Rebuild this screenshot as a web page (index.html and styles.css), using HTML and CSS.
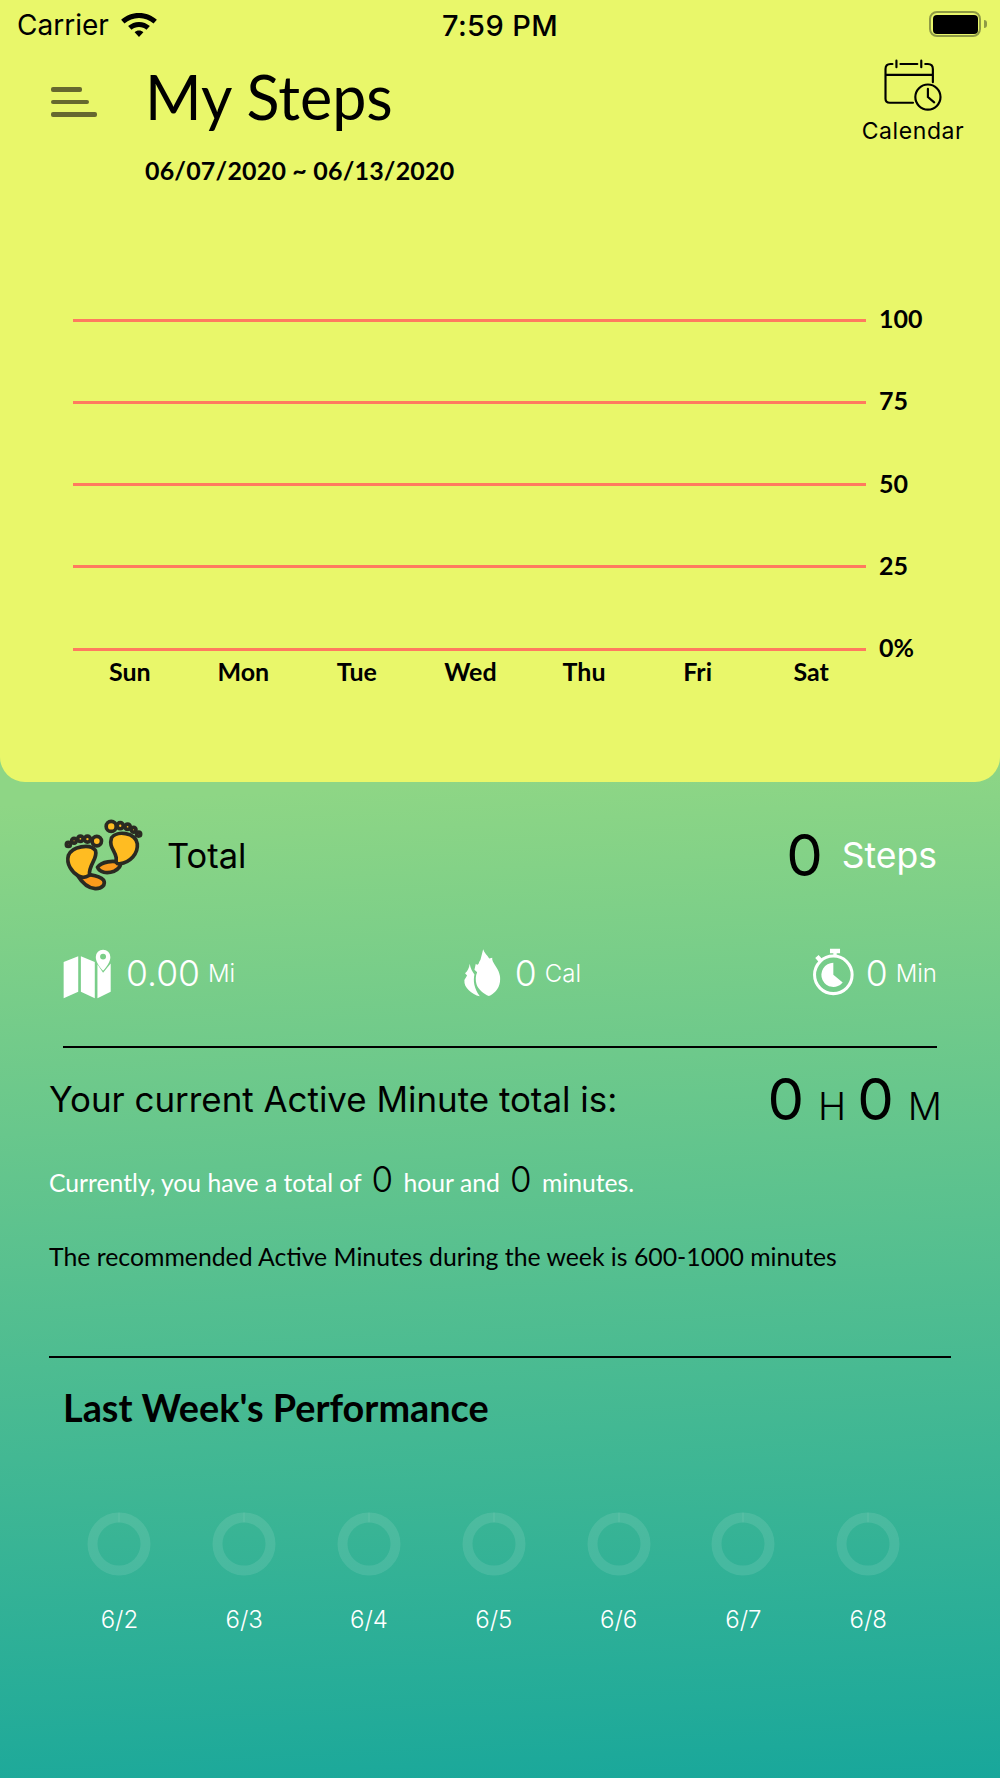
FILE: index.html
```html
<!DOCTYPE html>
<html lang="en">
<head>
<meta charset="utf-8">
<title>My Steps</title>
<link rel="stylesheet" href="styles.css">
</head>
<body>
<main class="screen">
  <section class="panel">
    <div class="status">
      <div class="status-left">
        <span>Carrier</span>
        <svg class="wifi" viewBox="0 0 36 26"><path d="M18 3C11 3 5.500 5.500 .8 9.500L4 13C8 9.700 12.500 7.700 18 7.700S28 9.700 32 13L35.200 9.500C30.500 5.500 25 3 18 3ZM18 11.500C14 11.500 10.500 13 7.500 15.500L10.800 19C12.800 17.300 15.200 16.300 18 16.300S23.200 17.300 25.200 19L28.500 15.500C25.500 13 22 11.500 18 11.500ZM18 19.800C16.300 19.800 14.900 20.400 13.800 21.400L18 26L22.200 21.400C21.100 20.400 19.700 19.800 18 19.800Z"/></svg>
      </div>
      <div class="status-time">7:59 PM</div>
      <div class="battery"><span class="battery-shell"><span class="battery-fill"></span></span><span class="battery-nub"></span></div>
    </div>
    <header class="head">
      <div class="menu"><i class="bar bar1"></i><i class="bar bar2"></i><i class="bar bar3"></i></div>
      <div class="titles">
        <h1>My Steps</h1>
        <p class="range">06/07/2020 ~ 06/13/2020</p>
      </div>
      <div class="cal">
        <svg class="cal-icon" viewBox="40 25 180 160" fill="none" stroke="#000" stroke-width="6.500" stroke-linecap="round">
          <path d="M68 40H62Q47 40 47 55V145Q47 157 60 157H130M92 40H143M167 40H175Q190 40 190 55V95M47 73H190M80 30V50M155 30V50"/>
          <circle cx="175" cy="140" r="38"/>
          <path d="M175 115V140L194 156"/>
        </svg>
        <span>Calendar</span>
      </div>
    </header>
    <div class="chart">
      <div class="gridrow"><i class="line"></i><span>100</span></div>
      <div class="gridrow"><i class="line"></i><span>75</span></div>
      <div class="gridrow"><i class="line"></i><span>50</span></div>
      <div class="gridrow"><i class="line"></i><span>25</span></div>
      <div class="gridrow"><i class="line"></i><span>0%</span></div>
      <div class="days"><span>Sun</span><span>Mon</span><span>Tue</span><span>Wed</span><span>Thu</span><span>Fri</span><span>Sat</span></div>
    </div>
  </section>

  <section class="totals">
    <div class="total-row">
      <svg class="feet" viewBox="60 50 260 230" stroke="#2a2a22" stroke-width="11" stroke-linejoin="round">
        <path fill="#fb9a1c" d="M112 224C130 218 175 222 190 238C198 252 185 265 165 264C140 262 125 245 112 224Z"/>
        <path fill="#ffbc22" d="M85 165C95 138 150 128 166 150C174 175 145 192 148 224C135 232 125 232 115 226C95 215 78 190 85 165Z"/>
        <circle fill="#ffbc22" cx="170" cy="122" r="14"/><circle fill="#ffbc22" cx="142" cy="116" r="9"/><circle fill="#ffbc22" cx="121" cy="115" r="8"/><circle fill="#ffbc22" cx="102" cy="121" r="7"/><circle fill="#ffbc22" cx="85" cy="132" r="6"/>
        <path fill="#fb9a1c" d="M172 200C185 182 220 180 238 186C245 195 235 205 222 212C200 220 178 216 172 200Z"/>
        <path fill="#ffbc22" d="M214 112C230 90 285 95 291 130C294 160 270 185 238 190C225 190 228 182 228 172C225 150 205 140 214 112Z"/>
        <circle fill="#ffbc22" cx="213" cy="78" r="15"/><circle fill="#ffbc22" cx="240" cy="76" r="9"/><circle fill="#ffbc22" cx="262" cy="79" r="8"/><circle fill="#ffbc22" cx="280" cy="88" r="7"/><circle fill="#ffbc22" cx="295" cy="101" r="6"/>
      </svg>
      <span class="total-label">Total</span>
      <span class="total-num">0</span>
      <span class="total-unit">Steps</span>
    </div>
    <div class="metrics">
      <div class="metric">
        <svg class="ic-map" viewBox="30 50 160 160" fill="#fff">
          <path d="M38 95L82 78V185L38 205ZM90 78L132 95V205L90 185ZM140 102L157 128L180 100V185L140 205Z"/>
          <path fill-rule="evenodd" d="M157 122C145 108 135 95 135 80A22 22 0 0 1 179 80C179 95 169 108 157 122ZM157 70A9 9 0 1 0 157 88A9 9 0 1 0 157 70Z"/>
        </svg>
        <span class="m-num">0.00</span><span class="m-unit">Mi</span>
      </div>
      <div class="metric metric-mid">
        <svg class="ic-fire" viewBox="35 50 125 155" fill="#fff">
          <path d="M98 57C101 68 110 74 116 84L125 82C124 90 128 94 133 104C145 122 151 136 148 154C145 175 130 190 115 196C100 190 82 175 78 160C75 150 75 135 80 125L72 118L76 100C80 104 84 104 86 95L90 88Z"/>
          <path d="M58 100C60 110 62 118 72 132C68 150 70 172 88 197C64 190 40 172 42 148L50 135L44 128C52 122 56 112 58 100Z"/>
        </svg>
        <span class="m-num">0</span><span class="m-unit">Cal</span>
      </div>
      <div class="metric">
        <svg class="ic-timer" viewBox="40 50 125 155" fill="#fff">
          <circle cx="102" cy="133" r="56" fill="none" stroke="#fff" stroke-width="9"/>
          <path d="M102 133V97A36 36 0 1 0 130 156Z"/>
          <path d="M92 55H122V69H112V80H102V69H92ZM48 83L58 74L70 87L60 96Z"/>
        </svg>
        <span class="m-num">0</span><span class="m-unit">Min</span>
      </div>
    </div>
    <hr class="rule rule-a">
    <div class="active">
      <p class="active-label">Your current Active Minute total is:</p>
      <p class="active-value"><b>0</b><small>H</small><b>0</b><small>M</small></p>
    </div>
    <p class="current">Currently, you have a total of <b>0</b> hour and <b>0</b> minutes.</p>
    <p class="recommend">The recommended Active Minutes during the week is 600-1000 minutes</p>
    <hr class="rule rule-b">
    <h2>Last Week's Performance</h2>
    <div class="rings">
      <div class="ring"><svg viewBox="0 0 64 64"><circle class="track" cx="32" cy="32" r="26.500"/><path class="tick" d="M32 .5V10.500"/></svg><span>6/2</span></div>
      <div class="ring"><svg viewBox="0 0 64 64"><circle class="track" cx="32" cy="32" r="26.500"/><path class="tick" d="M32 .5V10.500"/></svg><span>6/3</span></div>
      <div class="ring"><svg viewBox="0 0 64 64"><circle class="track" cx="32" cy="32" r="26.500"/><path class="tick" d="M32 .5V10.500"/></svg><span>6/4</span></div>
      <div class="ring"><svg viewBox="0 0 64 64"><circle class="track" cx="32" cy="32" r="26.500"/><path class="tick" d="M32 .5V10.500"/></svg><span>6/5</span></div>
      <div class="ring"><svg viewBox="0 0 64 64"><circle class="track" cx="32" cy="32" r="26.500"/><path class="tick" d="M32 .5V10.500"/></svg><span>6/6</span></div>
      <div class="ring"><svg viewBox="0 0 64 64"><circle class="track" cx="32" cy="32" r="26.500"/><path class="tick" d="M32 .5V10.500"/></svg><span>6/7</span></div>
      <div class="ring"><svg viewBox="0 0 64 64"><circle class="track" cx="32" cy="32" r="26.500"/><path class="tick" d="M32 .5V10.500"/></svg><span>6/8</span></div>
    </div>
  </section>
</main>
</body>
</html>
```
FILE: styles.css
```css
* { box-sizing: border-box; }
html, body { margin: 0; padding: 0; }
body { width: 1000px; height: 1778px; overflow: hidden; font-family: Inter, "Liberation Sans", sans-serif; color: #000; }
p, h1, h2 { margin: 0; font-weight: 400; }
.screen { width: 1000px; height: 1778px; background: linear-gradient(177deg, #8ed685 44%, #18a79b 100%); }

.panel { height: 782px; background: #e9f76a; border-radius: 0 0 25px 25px; }
.status { height: 50px; display: flex; align-items: center; padding: 0 13px 0 17px; justify-content: space-between; }
.status-left { display: flex; align-items: center; gap: 11px; font-size: 28px; width: 300px; }
.wifi { width: 38px; height: 27px; margin-top: -4px; }
.status-time { font-size: 29px; font-weight: 500; letter-spacing: .4px; margin-right: 4px; }
.battery { width: 300px; display: flex; justify-content: flex-end; align-items: center; margin-top: -2px; }
.battery-shell { width: 52px; height: 26px; border: 2.500px solid #8f9a45; border-radius: 8px; padding: 1.500px; display: block; }
.battery-fill { display: block; height: 100%; background: #000; border-radius: 4px; }
.battery-nub { width: 3px; height: 8px; background: #8f9a45; border-radius: 0 3px 3px 0; margin-left: 3px; }

.head { display: flex; height: 130px; padding-left: 51px; }
.menu { width: 46px; padding-top: 37px; display: flex; flex-direction: column; gap: 8px; flex: none; }
.bar { display: block; height: 4.500px; background: #66682f; border-radius: 2px; }
.bar1 { width: 31px; }
.bar2 { width: 38px; }
.bar3 { width: 46px; }
.titles { padding: 9px 0 0 48px; flex: 1; }
h1 { font-family: Lato, sans-serif; font-size: 61px; line-height: 76px; }
.range { font-family: Lato, sans-serif; font-weight: 700; font-size: 25px; letter-spacing: .18px; margin-top: 20px; line-height: 30px; }
.cal { width: 110px; margin-right: 32px; display: flex; flex-direction: column; align-items: center; font-size: 23px; letter-spacing: .6px; }
.cal-icon { width: 60px; height: 53px; margin: 9px 0 5px; }

.chart { padding: 140px 0 0 73px; }
.gridrow { display: flex; align-items: center; height: 82.250px; margin-top: -41px; }
.gridrow + .gridrow { margin-top: 0; }
.line { display: block; width: 793px; height: 3px; background: #ff7a5f; }
.gridrow span { font-family: Lato, sans-serif; font-weight: 700; font-size: 25px; margin: -4px 0 0 13px; }
.days { width: 795px; display: grid; grid-template-columns: repeat(7, 1fr); text-align: center; font-family: Lato, sans-serif; font-weight: 700; font-size: 25px; margin-top: -34px; line-height: 30px; }

.totals { padding: 18px 49px 0; }
.total-row { display: flex; align-items: center; height: 110px; padding: 0 14px; }
.feet { width: 87px; height: 77px; flex: none; margin-left: -3px; }
.total-label { font-size: 34.500px; margin-left: 20px; flex: 1; }
.total-num { font-size: 58px; }
.total-unit { font-size: 35.500px; color: #fff; margin-left: 19px; }

.metrics { display: flex; justify-content: space-between; align-items: center; height: 72px; padding: 0 14px; margin-top: 27px; }
.metric { display: flex; align-items: center; color: #fff; }
.metric-mid { margin-right: 4px; }
.ic-map { width: 55px; height: 53px; margin-left: -3px; }
.ic-fire { width: 42px; height: 52px; }
.ic-timer { width: 43px; height: 52px; }
.m-num { font-size: 35.500px; margin-left: 11px; font-weight: 300; }
.m-unit { font-size: 24px; margin-left: 8px; font-weight: 300; }

.rule { border: 0; height: 2px; background: #000; margin: 0; }
.rule-a { margin: 37px 14px 0; }
.active { display: flex; justify-content: space-between; align-items: center; height: 78px; margin-top: 12px; }
.active-label { font-size: 34.900px; }
.active-value { display: flex; align-items: baseline; gap: 14px; margin-right: 9px; }
.active-value b { font-size: 58px; font-weight: 400; }
.active-value small { font-size: 38px; font-weight: 300; }
.active-value small:nth-child(2) { margin-right: -3px; }
.current { font-family: Lato, sans-serif; font-size: 24.700px; color: #fff; margin-top: 16px; line-height: 50px; }
.current b { font-family: Inter, sans-serif; font-size: 35px; font-weight: 300; color: #000; margin: 0 4px; }
.recommend { font-family: Lato, sans-serif; font-size: 24.800px; margin-top: 34px; line-height: 30px; }
.rule-b { margin-top: 84px; }
h2 { font-family: Lato, sans-serif; font-weight: 700; font-size: 37.800px; padding-left: 14px; line-height: 46px; margin-top: 27px; }
.rings { display: flex; margin: 81px 0 0 8px; width: 875px; }
.ring { width: 124.800px; display: flex; flex-direction: column; align-items: center; gap: 29px; color: #fff; font-size: 24px; font-weight: 300; }
.ring svg { width: 64px; height: 64px; display: block; }
.track { fill: none; stroke: rgba(255,255,255,.1); stroke-width: 10; }
.tick { stroke: rgba(255,255,255,.1); stroke-width: 1; }
```
